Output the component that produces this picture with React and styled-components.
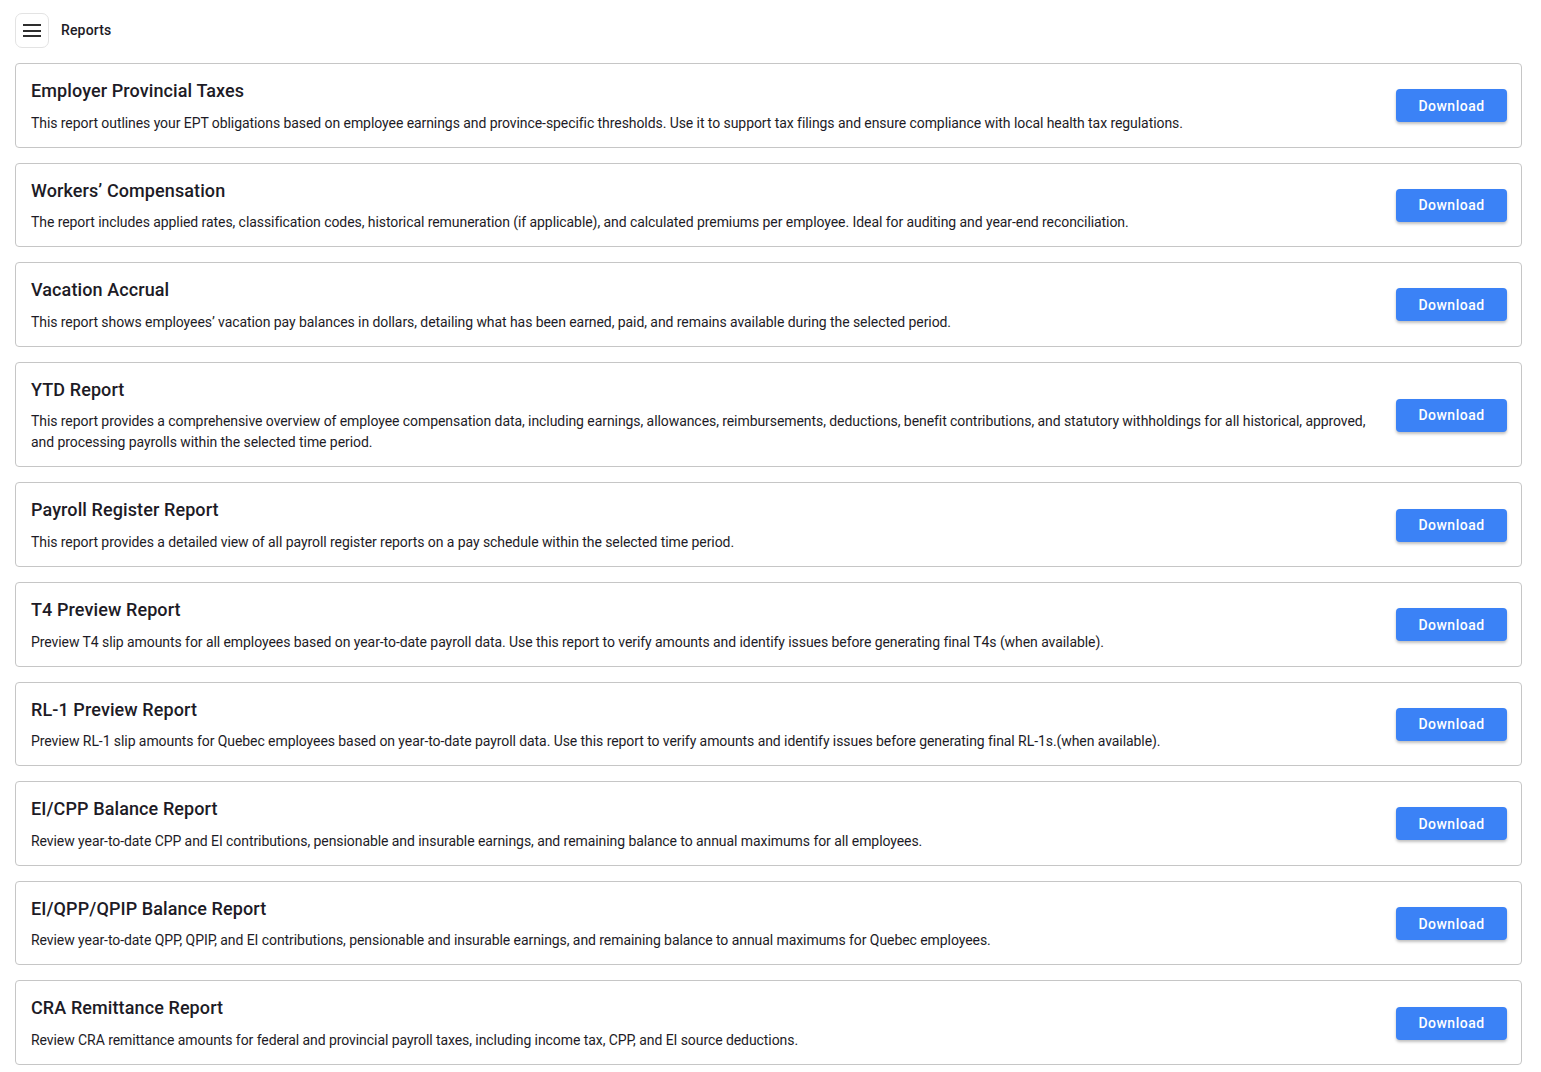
import React from "react";
import styled, { createGlobalStyle } from "styled-components";

const GlobalStyle = createGlobalStyle`
  html, body { margin: 0; padding: 0; background: #ffffff; }
  body { font-family: Roboto, "Noto Sans", "Liberation Sans", sans-serif; color: #1d1b26; }
  * { box-sizing: border-box; }
`;

const Page = styled.div`
  padding: 13px 19px 8px 15px;
  display: flex;
  flex-direction: column;
  gap: 15px;
`;

const Header = styled.header`
  display: flex;
  align-items: center;
  gap: 12px;
`;

const MenuButton = styled.button`
  width: 34px;
  height: 35px;
  border: 1px solid #e3e3e3;
  border-radius: 7px;
  background: #fff;
  display: flex;
  flex-direction: column;
  align-items: center;
  justify-content: center;
  gap: 3.3px;
  padding: 0;
  cursor: pointer;
`;

const Bar = styled.span`
  display: block;
  width: 18px;
  height: 2px;
  background: #2e2e2e;
`;

const PageTitle = styled.div`
  font-size: 14px;
  font-weight: 500;
  line-height: 16px;
  letter-spacing: 0.15px;
  color: #1d1b26;
  margin-bottom: 1px;
`;

const List = styled.div`
  display: flex;
  flex-direction: column;
  gap: 15px;
`;

const Card = styled.section`
  border: 1px solid #c6c6c6;
  border-radius: 4px;
  padding: 15px 14px 13px 15px;
  display: flex;
  align-items: center;
  gap: 24px;
`;

const Body = styled.div`
  flex: 1;
  display: flex;
  flex-direction: column;
  gap: 10px;
`;

const Title = styled.h2`
  margin: 0;
  font-size: 18px;
  font-weight: 500;
  line-height: 23.6px;
  color: #1d1b26;
  letter-spacing: 0.1px;
`;

const Desc = styled.p`
  margin: 0;
  font-size: 14px;
  font-weight: 400;
  line-height: 21px;
  letter-spacing: -0.07px;
  color: #1d1b26;
`;

const DownloadButton = styled.button`
  flex: none;
  width: 111px;
  height: 33px;
  margin-bottom: 1px;
  border: none;
  border-radius: 4px;
  background: #3b82f6;
  color: #fff;
  font-family: Roboto, "Liberation Sans", sans-serif;
  font-size: 14px;
  font-weight: 500;
  letter-spacing: 0.5px;
  box-shadow: 0 2px 3px rgba(0, 0, 0, 0.25);
  cursor: pointer;
`;

const reports = [
  {
    title: "Employer Provincial Taxes",
    desc: "This report outlines your EPT obligations based on employee earnings and province-specific thresholds. Use it to support tax filings and ensure compliance with local health tax regulations.",
  },
  {
    title: "Workers’ Compensation",
    desc: "The report includes applied rates, classification codes, historical remuneration (if applicable), and calculated premiums per employee. Ideal for auditing and year-end reconciliation.",
  },
  {
    title: "Vacation Accrual",
    desc: "This report shows employees’ vacation pay balances in dollars, detailing what has been earned, paid, and remains available during the selected period.",
  },
  {
    title: "YTD Report",
    desc: "This report provides a comprehensive overview of employee compensation data, including earnings, allowances, reimbursements, deductions, benefit contributions, and statutory withholdings for all historical, approved, and processing payrolls within the selected time period.",
  },
  {
    title: "Payroll Register Report",
    desc: "This report provides a detailed view of all payroll register reports on a pay schedule within the selected time period.",
  },
  {
    title: "T4 Preview Report",
    desc: "Preview T4 slip amounts for all employees based on year-to-date payroll data. Use this report to verify amounts and identify issues before generating final T4s (when available).",
  },
  {
    title: "RL-1 Preview Report",
    desc: "Preview RL-1 slip amounts for Quebec employees based on year-to-date payroll data. Use this report to verify amounts and identify issues before generating final RL-1s.(when available).",
  },
  {
    title: "EI/CPP Balance Report",
    desc: "Review year-to-date CPP and EI contributions, pensionable and insurable earnings, and remaining balance to annual maximums for all employees.",
  },
  {
    title: "EI/QPP/QPIP Balance Report",
    desc: "Review year-to-date QPP, QPIP, and EI contributions, pensionable and insurable earnings, and remaining balance to annual maximums for Quebec employees.",
  },
  {
    title: "CRA Remittance Report",
    desc: "Review CRA remittance amounts for federal and provincial payroll taxes, including income tax, CPP, and EI source deductions.",
  },
];

export default function App() {
  return (
    <>
      <GlobalStyle />
      <Page>
        <Header>
          <MenuButton aria-label="menu">
            <Bar />
            <Bar />
            <Bar />
          </MenuButton>
          <PageTitle>Reports</PageTitle>
        </Header>
        <List>
          {reports.map((r) => (
            <Card key={r.title}>
              <Body>
                <Title>{r.title}</Title>
                <Desc>{r.desc}</Desc>
              </Body>
              <DownloadButton>Download</DownloadButton>
            </Card>
          ))}
        </List>
      </Page>
    </>
  );
}
